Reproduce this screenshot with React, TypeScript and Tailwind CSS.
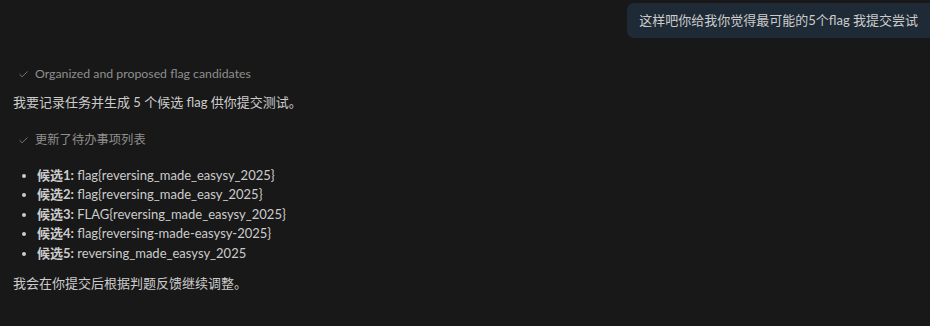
import { Check } from 'lucide-react'

const candidates = [
  { label: '候选1:', value: 'flag{reversing_made_easysy_2025}' },
  { label: '候选2:', value: 'flag{reversing_made_easy_2025}' },
  { label: '候选3:', value: 'FLAG{reversing_made_easysy_2025}' },
  { label: '候选4:', value: 'flag{reversing-made-easysy-2025}' },
  { label: '候选5:', value: 'reversing_made_easysy_2025' }
]

function Step({ text }: { text: string }) {
  return (
    <div className="flex items-center gap-[6px] pl-[18px] text-[12.3px] text-[#8f8f8f]">
      <Check size={11} strokeWidth={1.7} />
      <span>{text}</span>
    </div>
  )
}

export default function App() {
  return (
    <div
      className="h-[326px] w-[930px] overflow-hidden bg-[#181818] text-[13px] text-[#cccccc]"
      style={{ fontFamily: 'Lato, "Noto Sans CJK SC", sans-serif' }}
    >
      {/* user message */}
      <div className="flex justify-end pt-[3px]">
        <div className="rounded-l-[7px] bg-[#1e2a36] py-[8px] pl-[12px] pr-[12px] leading-[19px]">
          这样吧你给我你觉得最可能的5个flag 我提交尝试
        </div>
      </div>

      <div className="mt-[27px]">
        <Step text="Organized and proposed flag candidates" />
        <p className="mt-[10px] pl-[13px] leading-[19px]">我要记录任务并生成 5 个候选 flag 供你提交测试。</p>
      </div>

      <div className="mt-[19px]">
        <Step text="更新了待办事项列表" />
        <ul className="mt-[16px] list-disc pl-[37px] leading-[19.5px] marker:text-[#cccccc]">
          {candidates.map(c => (
            <li key={c.label}>
              <span className="font-bold">{c.label}</span> {c.value}
            </li>
          ))}
        </ul>
        <p className="mt-[11px] pl-[13px] leading-[19px]">我会在你提交后根据判题反馈继续调整。</p>
      </div>
    </div>
  )
}
